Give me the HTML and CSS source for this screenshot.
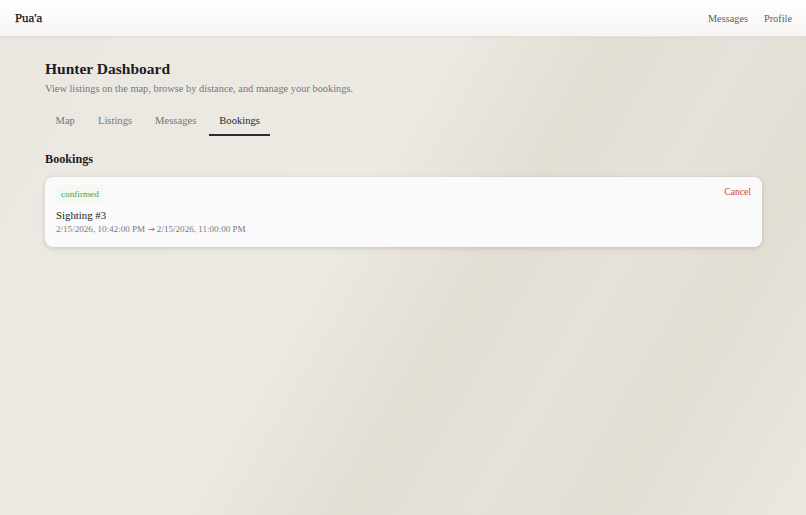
FILE: index.html
```html
<!DOCTYPE html>
<html lang="en">
<head>
<meta charset="utf-8">
<title>Pua'a — Hunter Dashboard</title>
<link rel="stylesheet" href="styles.css">
</head>
<body>
<header class="topbar">
  <a class="brand" href="#">Pua'a</a>
  <nav class="topnav">
    <a href="#">Messages</a>
    <a href="#">Profile</a>
  </nav>
</header>
<main class="page">
  <h1 class="title">Hunter Dashboard</h1>
  <p class="subtitle">View listings on the map, browse by distance, and manage your bookings.</p>
  <div class="tabs">
    <button class="tab">Map</button>
    <button class="tab">Listings</button>
    <button class="tab">Messages</button>
    <button class="tab active">Bookings</button>
  </div>
  <h2 class="section">Bookings</h2>
  <div class="booking">
    <div class="booking-top">
      <span class="badge">confirmed</span>
      <a class="cancel" href="#">Cancel</a>
    </div>
    <div class="booking-name">Sighting #3</div>
    <div class="booking-time">2/15/2026, 10:42:00 PM <span class="arrow">→</span> 2/15/2026, 11:00:00 PM</div>
  </div>
</main>
</body>
</html>
```
FILE: styles.css
```css
* { box-sizing: border-box; }

html, body {
  margin: 0;
  height: 100%;
}

body {
  font-family: "Liberation Serif", "Times New Roman", serif;
  color: #1c1c22;
  background: linear-gradient(120deg,
    #ebe8e1 0%,
    #ece9e3 30%,
    #edeae4 42%,
    #e3ded4 58%,
    #e6e1da 70%,
    #e2ded4 82%,
    #ebe8e2 100%);
  background-attachment: fixed;
}

.topbar {
  height: 37px;
  display: flex;
  align-items: center;
  justify-content: space-between;
  padding: 0 14px 0 15px;
  background: linear-gradient(#ffffff, #f6f5f3);
  border-bottom: 1px solid #e4e1da;
  box-shadow: 0 1px 2px rgba(0, 0, 0, 0.04);
}

.brand {
  font-size: 12.8px;
  font-weight: 400;
  color: #0f0f14;
  text-decoration: none;
  -webkit-text-stroke: 0.25px #0f0f14;
}

.topnav {
  display: flex;
  gap: 16px;
}

.topnav a {
  font-size: 10.3px;
  color: #5d5f66;
  text-decoration: none;
}

.page {
  padding: 22px 44px 0 45px;
}

.title {
  margin: 0;
  font-size: 15.5px;
  font-weight: 700;
  line-height: 20px;
}

.subtitle {
  margin: 3px 0 0;
  font-size: 10.4px;
  color: #75767c;
  line-height: 14px;
}

.tabs {
  display: flex;
  gap: 2px;
  margin-top: 14px;
}

.tab {
  font-family: inherit;
  font-size: 10.6px;
  color: #74757b;
  background: none;
  border: 0;
  border-bottom: 2px solid transparent;
  padding: 5px 10.5px 8px;
  cursor: pointer;
}

.tab.active {
  color: #26272c;
  border-bottom-color: #2b2c31;
}

.section {
  margin: 15px 0 0;
  font-size: 12.2px;
  font-weight: 700;
  line-height: 16px;
}

.booking {
  margin-top: 10px;
  background: #fafafa;
  border-radius: 8px;
  box-shadow: 0 1px 4px rgba(0, 0, 0, 0.12), 0 2px 8px rgba(0, 0, 0, 0.04);
  padding: 6px 11px 11px;
}

.booking-top {
  display: flex;
  justify-content: space-between;
  align-items: flex-start;
}

.badge {
  font-size: 9.2px;
  color: #45a251;
  background: #f4f8f2;
  padding: 3px 5px;
  border-radius: 4px;
  line-height: 12px;
  margin-top: 2px;
}

.cancel {
  font-size: 9.6px;
  color: #cd4b45;
  text-decoration: none;
  line-height: 12px;
  margin-top: 3px;
}

.booking-name {
  margin-top: 5px;
  font-size: 10.8px;
  color: #22232a;
  line-height: 14px;
}

.booking-time {
  font-size: 9.1px;
  color: #77787e;
  line-height: 14px;
}

.arrow {
  font-family: "DejaVu Sans", sans-serif;
  font-size: 8.5px;
}
```
